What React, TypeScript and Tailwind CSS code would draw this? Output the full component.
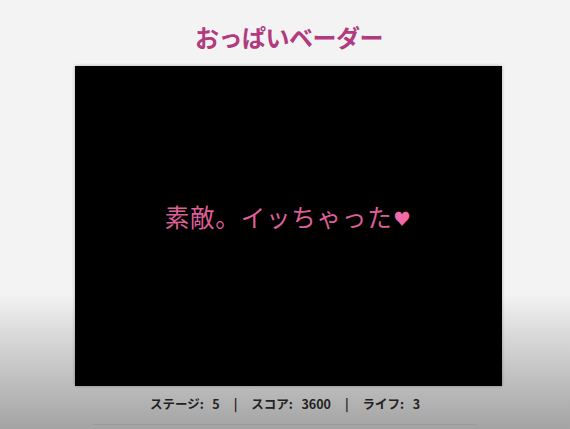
export default function App() {
  const jp = { fontFamily: '"Noto Sans CJK JP", "Noto Sans", sans-serif' };

  return (
    <div
      className="relative flex h-[429px] w-[570px] flex-col items-center overflow-hidden bg-[#f3f3f3]"
      style={jp}
    >
      <h1 className="ml-[8px] mt-[21px] shrink-0 text-[24px] font-bold leading-[32px] tracking-[-0.5px] text-[#b23a7f]">
        おっぱいベーダー
      </h1>

      <div className="ml-[6px] mt-[13px] flex h-[320px] w-[427px] shrink-0 items-center justify-center bg-black pb-[17px] shadow-[0_0_3px_rgba(0,0,0,0.3)]">
        <p className="flex items-center text-[24.5px] font-normal leading-none tracking-[0.8px] text-[#dc5f98]">
          素敵。イッちゃった
          <span className="ml-[1px] text-[17px] text-[#f06aa8]">♥</span>
        </p>
      </div>

      <div className="mt-[9px] flex shrink-0 items-center gap-[14px] text-[12.5px] font-semibold text-[#2e2e2e]">
        <span>ステージ:&nbsp;&nbsp;&nbsp;5</span>
        <span>|</span>
        <span>スコア:&nbsp;&nbsp;&nbsp;3600</span>
        <span>|</span>
        <span>ライフ:&nbsp;&nbsp;&nbsp;3</span>
      </div>

      <div className="mt-[10px] h-[20px] w-[384px] shrink-0 border-t border-[#e2e2e2]" />

      {/* darkening overlay at the bottom */}
      <div className="pointer-events-none absolute inset-x-0 bottom-0 h-[135px] bg-[linear-gradient(to_bottom,rgba(0,0,0,0)_0%,rgba(0,0,0,0.12)_35%,rgba(0,0,0,0.33)_100%)]" />
    </div>
  );
}
